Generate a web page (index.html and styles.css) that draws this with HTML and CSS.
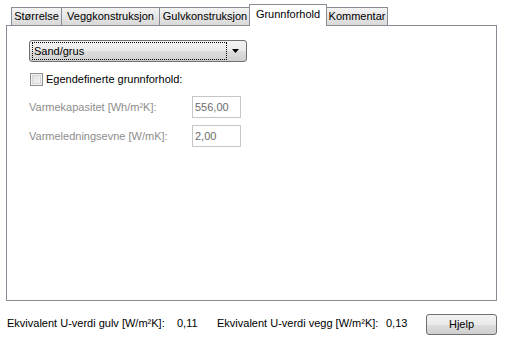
FILE: index.html
```html
<!DOCTYPE html>
<html>
<head>
<meta charset="utf-8">
<link rel="stylesheet" href="styles.css">
</head>
<body>
<div class="tabcontrol">
  <div class="tabs">
    <div class="tab t1">Størrelse</div>
    <div class="tab t2">Veggkonstruksjon</div>
    <div class="tab t3">Gulvkonstruksjon</div>
    <div class="tab sel">Grunnforhold</div>
    <div class="tab t5">Kommentar</div>
  </div>
  <div class="panel">
    <div class="combo">
      <div class="combo-text"><span>Sand/grus</span></div>
      <div class="combo-arrow"><svg width="7" height="4" viewBox="0 0 7 4"><path d="M0 0H7L3.5 4Z" fill="#000"/></svg></div>
    </div>
    <div class="check-row">
      <span class="checkbox"></span>
      <span>Egendefinerte grunnforhold:</span>
    </div>
    <div class="field-row r1">
      <span class="flabel">Varmekapasitet [Wh/m²K]:</span>
      <span class="input">556,00</span>
    </div>
    <div class="field-row r2">
      <span class="flabel">Varmeledningsevne [W/mK]:</span>
      <span class="input">2,00</span>
    </div>
  </div>
</div>
<div class="footer">
  <span class="f1">Ekvivalent U-verdi gulv [W/m²K]:</span>
  <span class="f2">0,11</span>
  <span class="f3">Ekvivalent U-verdi vegg [W/m²K]:</span>
  <span class="f4">0,13</span>
  <button class="btn">Hjelp</button>
</div>
</body>
</html>
```
FILE: styles.css
```css
html, body {
  margin: 0;
  padding: 0;
  background: #ffffff;
}
body {
  font-family: "Liberation Sans", Arial, sans-serif;
  font-size: 11px;
  color: #000;
  width: 506px;
  height: 342px;
  overflow: hidden;
}
.tabcontrol {
  margin: 4px 0 0 6px;
  width: 491px;
}
.tabs {
  display: flex;
  align-items: flex-end;
  height: 21px;
  padding-left: 5px;
  position: relative;
  z-index: 2;
}
.tab {
  box-sizing: border-box;
  height: 18px;
  border: 1px solid #898c95;
  border-bottom: none;
  margin-right: -1px;
  background: linear-gradient(#f3f3f3, #e6e6e6 50%, #d9d9d9);
  display: flex;
  align-items: center;
  justify-content: center;
  padding-bottom: 1px;
}
.t1 { width: 51px; }
.t2 { width: 99px; }
.t3 { width: 92px; margin-right: -1px; }
.sel {
  width: 78px;
  height: 22px;
  background: #ffffff;
  margin: 0 -1px -1px -1px;
  padding-bottom: 4px;
  position: relative;
  z-index: 3;
}
.t5 { width: 62px; margin-left: 0; }
.panel {
  box-sizing: border-box;
  height: 276px;
  border: 1px solid #898c95;
  background: #fff;
  padding: 14px 0 0 22px;
  position: relative;
  z-index: 1;
}
.combo {
  box-sizing: border-box;
  width: 218px;
  height: 22px;
  border: 1px solid #707070;
  border-radius: 3px;
  background: linear-gradient(#f2f2f2, #ebebeb 50%, #dddddd 51%, #cfcfcf);
  display: flex;
  align-items: center;
  padding: 0 2px;
}
.combo-text {
  flex: 1;
  height: 16px;
  border: 1px dotted #000;
  display: flex;
  align-items: center;
  padding-left: 1px;
}
.combo-arrow {
  width: 17px;
  display: flex;
  justify-content: center;
  align-items: center;
}
.combo-arrow svg { display: block; }
.check-row {
  display: flex;
  align-items: center;
  margin-top: 10px;
  margin-left: 1px;
  height: 14px;
}
.checkbox {
  box-sizing: border-box;
  width: 13px;
  height: 13px;
  border: 1px solid #8e8f8f;
  background: linear-gradient(135deg, #dcdcdc, #f7f7f7);
  box-shadow: inset 0 0 0 1px #f4f4f4, inset 0 0 0 2px #d5d5d5;
  margin-right: 3px;
}
.field-row {
  display: flex;
  align-items: center;
  height: 22px;
  color: #8d8d8d;
}
.r1 { margin-top: 10px; }
.r2 { margin-top: 7px; }
.flabel { width: 163px; }
.input {
  box-sizing: border-box;
  width: 49px;
  height: 22px;
  border: 1px solid #c6c6c6;
  color: #6d6d6d;
  display: flex;
  align-items: center;
  padding-left: 2px;
  background: #fff;
}
.footer {
  display: flex;
  align-items: center;
  margin-top: 11px;
  height: 22px;
  padding-left: 7px;
}
.f1 { width: 170px; }
.f2 { width: 40px; }
.f3 { width: 169px; }
.f4 { width: 40px; }
.btn {
  box-sizing: border-box;
  width: 71px;
  height: 21px;
  border: 1px solid #707070;
  border-radius: 3px;
  background: linear-gradient(#f2f2f2, #ebebeb 50%, #dddddd 51%, #cfcfcf);
  font-family: "Liberation Sans", Arial, sans-serif;
  font-size: 11px;
  color: #000;
  padding: 0;
  margin-top: 2px;
}
```
